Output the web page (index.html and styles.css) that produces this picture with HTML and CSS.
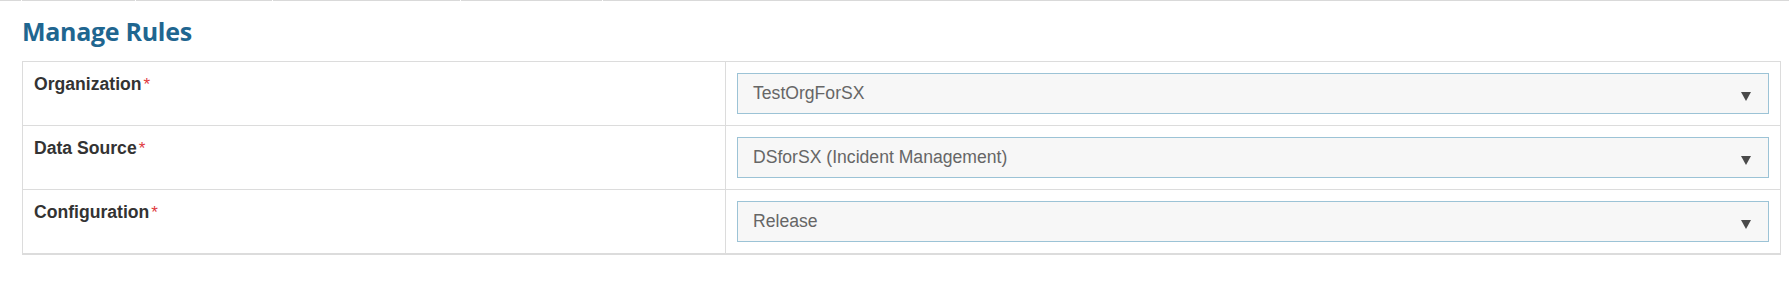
FILE: index.html
```html
<!DOCTYPE html>
<html>
<head>
<meta charset="utf-8">
<link rel="stylesheet" href="styles.css">
</head>
<body>
<div class="topline">
  <span class="seg s1"></span><span class="seg s2"></span><span class="seg s3"></span><span class="seg s4"></span><span class="seg s5"></span><span class="seg s6"></span>
</div>
<h1 class="title">Manage Rules</h1>
<div class="form-table">
  <div class="row">
    <div class="label-cell"><span class="label">Organization</span><span class="req">*</span></div>
    <div class="field-cell">
      <div class="select"><span class="value">TestOrgForSX</span><span class="arrow"></span></div>
    </div>
  </div>
  <div class="row">
    <div class="label-cell"><span class="label">Data Source</span><span class="req">*</span></div>
    <div class="field-cell">
      <div class="select"><span class="value">DSforSX (Incident Management)</span><span class="arrow"></span></div>
    </div>
  </div>
  <div class="row last">
    <div class="label-cell"><span class="label">Configuration</span><span class="req">*</span></div>
    <div class="field-cell">
      <div class="select"><span class="value">Release</span><span class="arrow"></span></div>
    </div>
  </div>
</div>
</body>
</html>
```
FILE: styles.css
```css
html, body {
  margin: 0;
  padding: 0;
  background: #ffffff;
}
body {
  width: 1789px;
  height: 283px;
  overflow: hidden;
  font-family: "Liberation Sans", Arial, sans-serif;
}
.topline {
  display: flex;
  gap: 1px;
  height: 1px;
}
.seg {
  display: block;
  height: 1px;
  background: #d9d9d9;
}
.s1 { width: 21px; }
.s2 { width: 113px; }
.s3 { width: 136px; }
.s4 { width: 187px; }
.s5 { width: 141px; }
.s6 { flex: 1; }

.title {
  margin: 0;
  padding: 15px 0 0 22px;
  height: 45px;
  box-sizing: border-box;
  font-family: "Open Sans", sans-serif;
  font-weight: 700;
  font-size: 25px;
  line-height: 30px;
  color: #1f6690;
  letter-spacing: -0.3px;
}
.form-table {
  margin: 15px 0 0 22px;
  width: 1759px;
  box-sizing: border-box;
  border: 1px solid #dcdcdc;
  border-bottom-width: 2px;
}
.row {
  display: grid;
  grid-template-columns: 703px 1fr;
  border-bottom: 1px solid #dcdcdc;
}
.row.last {
  border-bottom: none;
}
.label-cell {
  padding: 11px 11px;
  border-right: 1px solid #dcdcdc;
  font-size: 17.6px;
  line-height: 23px;
  color: #333333;
}
.label {
  font-weight: 700;
}
.req {
  color: #e0393e;
  margin-left: 2px;
  font-size: 17px;
}
.field-cell {
  padding: 11px 11px 11px 11px;
}
.select {
  display: flex;
  align-items: center;
  justify-content: space-between;
  height: 41px;
  box-sizing: border-box;
  border: 1px solid #9cc3d6;
  background: #f7f7f7;
  padding: 0 17px 0 15px;
  font-size: 17.6px;
  color: #666666;
}
.value {
  line-height: 23px;
}
.arrow {
  width: 0;
  height: 0;
  border-left: 5.5px solid transparent;
  border-right: 5.5px solid transparent;
  border-top: 9px solid #4a4a4a;
  margin-top: 6px;
}
```
